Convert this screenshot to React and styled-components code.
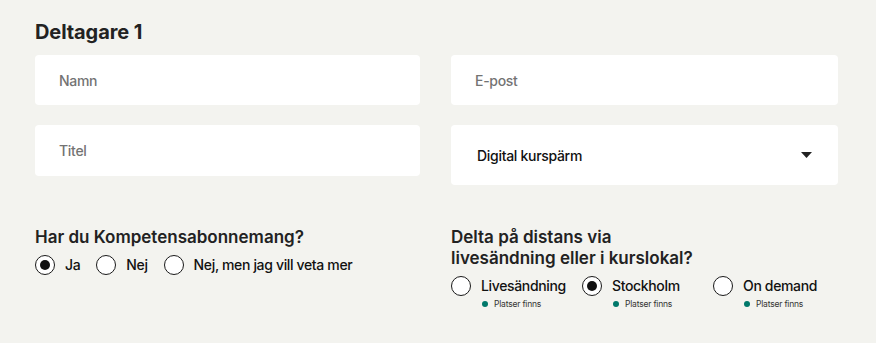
import React from "react";
import styled, { createGlobalStyle } from "styled-components";

const Global = createGlobalStyle`
  html, body { margin: 0; padding: 0; background: #f3f3ef; }
  body { font-family: Inter, "Noto Sans", Arial, sans-serif; color: #1f1f1f; }
  * { box-sizing: border-box; }
`;

const Page = styled.div`
  width: 876px;
  height: 343px;
  padding: 20px 38px 0 35px;
  background: #f3f3ef;
`;

const Heading = styled.h2`
  margin: 0 0 11px;
  font-size: 20px;
  line-height: 24px;
  font-weight: 700;
  color: #222;
  letter-spacing: -0.1px;
`;

const Grid = styled.div`
  display: grid;
  grid-template-columns: 385px 387px;
  column-gap: 31px;
  row-gap: 20px;
  align-items: start;
`;

const Field = styled.div`
  height: ${(p) => p.$h}px;
  background: #fff;
  border-radius: 4px;
  display: flex;
  align-items: center;
  justify-content: space-between;
  padding: 0 26px 0 ${(p) => p.$pl}px;
  font-size: 14px;
  letter-spacing: -0.3px;
  font-weight: 500;
  color: ${(p) => (p.$value ? "#111" : "#737373")};
`;

const Questions = styled.div`
  display: grid;
  grid-template-columns: 385px 387px;
  column-gap: 31px;
  margin-top: 42px;
`;

const Question = styled.div`
  font-size: 17px;
  line-height: 21px;
  font-weight: 600;
  color: #222;
  margin-bottom: 7px;
`;

const Options = styled.div`
  display: flex;
  gap: 16px;
`;

const OptionGrid = styled.div`
  display: grid;
  grid-template-columns: 131px 131px 125px;
`;

const Option = styled.label`
  display: flex;
  align-items: flex-start;
  gap: 10px;
  font-size: 14px;
  letter-spacing: -0.35px;
  font-weight: 500;
  color: #111;
`;

const Circle = styled.span`
  flex: none;
  width: 20px;
  height: 20px;
  border-radius: 50%;
  border: 1.5px solid #1a1a1a;
  background: #fff;
  display: flex;
  align-items: center;
  justify-content: center;
  &::after {
    content: "";
    width: 10px;
    height: 10px;
    border-radius: 50%;
    background: #111;
    display: ${(p) => (p.$checked ? "block" : "none")};
  }
`;

const LabelCol = styled.span`
  display: flex;
  flex-direction: column;
  line-height: 20px;
`;

const Sub = styled.span`
  display: flex;
  align-items: center;
  gap: 6px;
  font-size: 8.5px;
  letter-spacing: -0.2px;
  line-height: 16px;
  font-weight: 400;
  color: #333;
  padding-left: 1px;
  &::before {
    content: "";
    width: 6px;
    height: 6px;
    border-radius: 50%;
    background: #00786a;
  }
`;

const Arrow = () => (
  <svg width="11" height="6" viewBox="0 0 11 6">
    <path d="M0 0 H11 L5.5 6 Z" fill="#222" />
  </svg>
);

function Radio({ checked, label, sub }) {
  return (
    <Option>
      <Circle $checked={checked} />
      <LabelCol>
        {label}
        {sub && <Sub>{sub}</Sub>}
      </LabelCol>
    </Option>
  );
}

export default function App() {
  return (
    <>
      <Global />
      <Page>
        <Heading>Deltagare 1</Heading>
        <Grid>
          <Field $h={50} $pl={24}>Namn</Field>
          <Field $h={50} $pl={24}>E-post</Field>
          <Field $h={51} $pl={24}>Titel</Field>
          <Field $h={60} $pl={26} $value>
            Digital kurspärm
            <Arrow />
          </Field>
        </Grid>
        <Questions>
          <div>
            <Question>Har du Kompetensabonnemang?</Question>
            <Options>
              <Radio checked label="Ja" />
              <Radio label="Nej" />
              <Radio label="Nej, men jag vill veta mer" />
            </Options>
          </div>
          <div>
            <Question>
              Delta på distans via
              <br />
              livesändning eller i kurslokal?
            </Question>
            <OptionGrid>
              <Radio label="Livesändning" sub="Platser finns" />
              <Radio checked label="Stockholm" sub="Platser finns" />
              <Radio label="On demand" sub="Platser finns" />
            </OptionGrid>
          </div>
        </Questions>
      </Page>
    </>
  );
}
